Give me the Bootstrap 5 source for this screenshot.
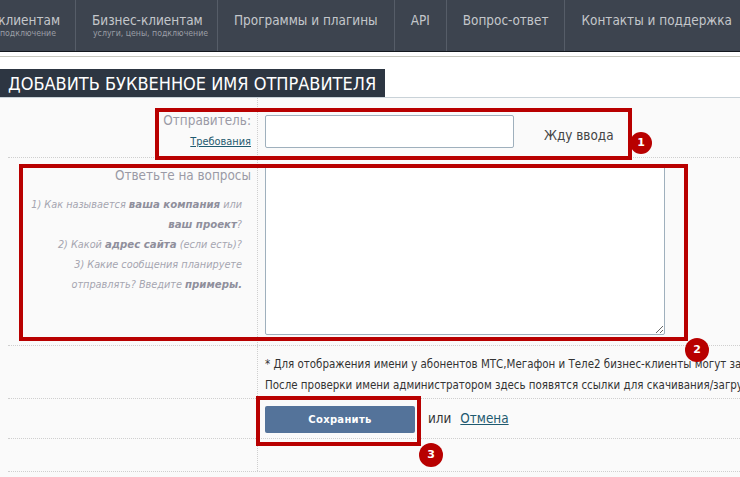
<!DOCTYPE html>
<html lang="ru">
<head>
<meta charset="utf-8">
<link href="https://cdn.jsdelivr.net/npm/bootstrap@5.3.0/dist/css/bootstrap.min.css" rel="stylesheet">
<style>
html,body{height:477px;overflow:hidden}
body{background:#fff;font-family:"DejaVu Sans Condensed","DejaVu Sans",sans-serif;color:#333;position:relative;font-size:12px}
.topbar{height:52px;background:#3d444f;border-bottom:1px solid #14181e;width:740px;overflow:hidden}
.topitem{height:51px;padding:13px 16px 0;border-right:1px solid #565d68;color:#c4c7cb;font-size:13.45px;line-height:16px;white-space:nowrap;text-decoration:none;flex:none}
.topitem small{display:block;font-size:8.7px;line-height:11px;margin-top:-1px;padding-left:1px;color:#9a9ea5}
.topitem.firstcut{width:76px;padding:13px 15px 0 0;align-items:flex-end;overflow:hidden}
.topitem.firstcut small{padding-right:4px}
.topitem.bizitem{width:142px;padding-right:0}
.topitem.lastcut{border-right:0}
.rule{height:5px;border-bottom:1px solid #c8c8bf}
.headwrap{margin-top:12px;height:29px;border-bottom:1px solid #c9d2d8}
.headline{display:inline-block;width:385px;height:28px;background:#2d3642;color:#fff;font-size:18px;line-height:29px;padding-left:8px;margin:0;font-weight:400;white-space:nowrap;font-family:"DejaVu Sans Condensed","DejaVu Sans",sans-serif}
.formarea{background:#fafafa;height:380px;padding-left:8px;overflow:hidden}
.frow{border-bottom:1px dotted #cfcfcf;width:732px}
.fleft{width:250px;flex:none;border-right:1px dotted #cfcfcf;padding-right:6px;text-align:right;color:#9a9aa6}
.fright{padding-left:7px;flex:1;min-width:0;white-space:nowrap;overflow:hidden}
.rowa{height:60px}.rowb{height:188px}.rowc{height:53px}.rowd{height:40px}.rowe{height:33px}
.senderlabel{padding-top:14px}
.quizlabel{padding-top:9px}
.flabel{font-size:13.4px;line-height:18px}
.freq{font-size:10.9px;display:block;margin-top:5px;line-height:14px}
.freq,.flink{color:#1f5a70;text-decoration:underline}
.sender{width:249px;height:33px;border:1px solid #9fb0bd;border-radius:2px;background:#fff;margin-top:17px;padding:0 6px}
.wait{font-size:13.4px;color:#444;margin:28px 0 0 30px}
.quest{width:400px;height:170px;border:1px solid #9fb0bd;border-radius:2px;background:#fff;display:block;margin:7px 0 0;padding:4px}
.tips{font-style:italic;font-size:10.8px;line-height:20px;padding:10px 9px 0 20px;color:#a5a5b0;margin:0}
.tips b{color:#8f8f9c;font-size:11.3px}
.note{font-size:11.45px;line-height:21px;color:#333;padding-top:8px;margin:0}
.savebtn{width:150px;height:27px;background:#54739a;border:0;border-radius:2px;color:#fff;font-size:10px;font-weight:700;letter-spacing:.3px;padding:0;font-family:"DejaVu Sans",sans-serif}
.actions{padding-top:2px}
.orline{font-size:13.4px;color:#333;margin-left:13px}
.flink{margin-left:9px;color:#1f5a70}
.redbox{position:absolute;border:4px solid #b80000;pointer-events:none}
.boxa{left:155px;top:108px;width:477px;height:52px}
.boxb{left:19px;top:164px;width:669px;height:177px}
.boxc{left:256px;top:396px;width:165px;height:50px}
.numdot{position:absolute;width:24px;height:24px;border-radius:50%;background:#b80000;color:#fff;font:700 11px/24px "DejaVu Sans",sans-serif;text-align:center}
.dota{left:630px;top:132px;width:22px;height:22px;line-height:22px}
.dotb{left:685px;top:338px}
.dotc{left:419px;top:443px}
</style>
</head>
<body>
<nav class="topbar d-flex">
  <a class="topitem firstcut d-flex flex-column" href="#"><span>Частным клиентам</span><small>услуги, цены, подключение</small></a>
  <a class="topitem bizitem" href="#"><span>Бизнес-клиентам</span><small>услуги, цены, подключение</small></a>
  <a class="topitem" href="#">Программы и плагины</a>
  <a class="topitem" href="#">API</a>
  <a class="topitem" href="#">Вопрос-ответ</a>
  <a class="topitem lastcut" href="#">Контакты и поддержка</a>
</nav>
<div class="rule"></div>
<div class="headwrap"><h1 class="headline">ДОБАВИТЬ БУКВЕННОЕ ИМЯ ОТПРАВИТЕЛЯ</h1></div>
<main class="formarea">
  <div class="frow d-flex rowa">
    <div class="fleft senderlabel"><span class="flabel">Отправитель:</span><a class="freq" href="#">Требования</a></div>
    <div class="fright d-flex align-items-start"><input class="sender" type="text"><span class="wait">Жду ввода</span></div>
  </div>
  <div class="frow d-flex rowb">
    <div class="fleft"><div class="flabel quizlabel">Ответьте на вопросы</div>
      <p class="tips">1) Как называется <b>ваша компания</b> или <b>ваш проект</b>?<br>2) Какой <b>адрес сайта</b> (если есть)?<br>3) Какие сообщения планируете отправлять? Введите <b>примеры.</b></p></div>
    <div class="fright"><textarea class="quest"></textarea></div>
  </div>
  <div class="frow d-flex rowc">
    <div class="fleft"></div>
    <div class="fright"><p class="note">* Для отображения имени у абонентов МТС,Мегафон и Теле2 бизнес-клиенты могут заполнить заявку<br>После проверки имени администратором здесь появятся ссылки для скачивания/загрузки документов</p></div>
  </div>
  <div class="frow d-flex rowd">
    <div class="fleft"></div>
    <div class="fright actions d-flex align-items-center"><button class="savebtn" type="button">Сохранить</button><span class="orline">или</span><a class="flink orline" href="#">Отмена</a></div>
  </div>
  <div class="frow d-flex rowe"><div class="fleft"></div><div class="fright"></div></div>
</main>
<div class="redbox boxa"></div>
<div class="redbox boxb"></div>
<div class="redbox boxc"></div>
<div class="numdot dota">1</div>
<div class="numdot dotb">2</div>
<div class="numdot dotc">3</div>
</body>
</html>
